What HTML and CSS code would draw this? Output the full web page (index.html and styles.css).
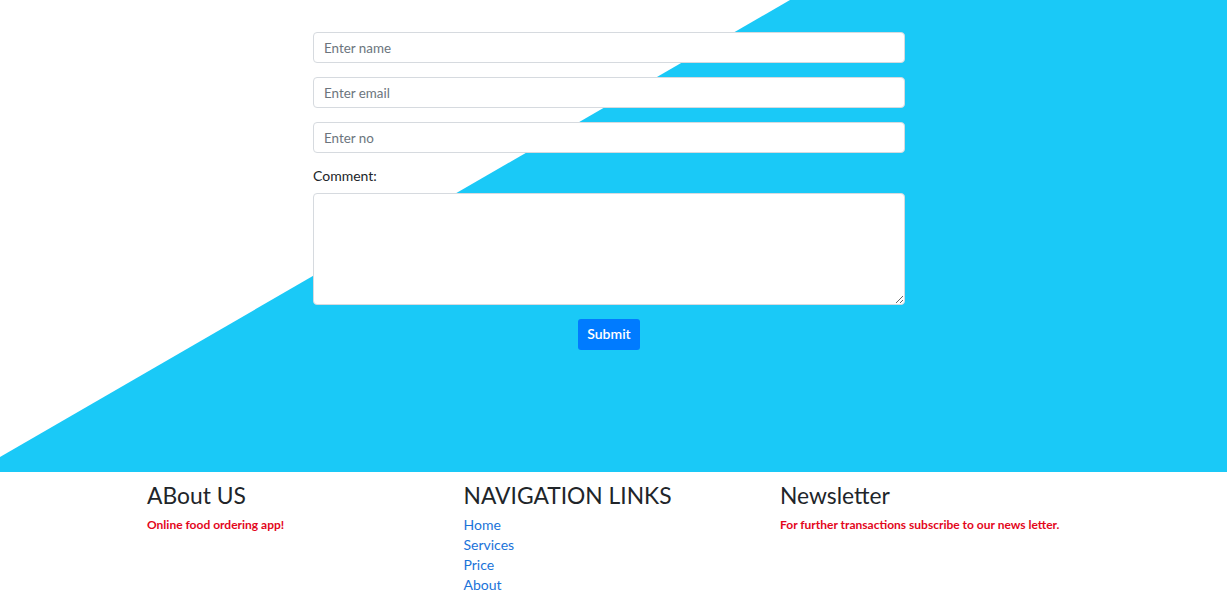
FILE: index.html
```html
<!DOCTYPE html>
<html>
<head>
<meta charset="utf-8">
<link rel="stylesheet" href="styles.css">
</head>
<body>
<section class="contact">
  <form class="contact-form">
    <input class="field" type="text" placeholder="Enter name">
    <input class="field" type="email" placeholder="Enter email">
    <input class="field" type="text" placeholder="Enter no">
    <label class="label">Comment:</label>
    <textarea class="area"></textarea>
    <div class="actions"><button class="btn" type="button">Submit</button></div>
  </form>
</section>
<footer class="footer">
  <div class="col">
    <h4 class="title">ABout US</h4>
    <p class="note">Online food ordering app!</p>
  </div>
  <div class="col">
    <h4 class="title">NAVIGATION LINKS</h4>
    <ul class="links">
      <li><a href="#">Home</a></li>
      <li><a href="#">Services</a></li>
      <li><a href="#">Price</a></li>
      <li><a href="#">About</a></li>
    </ul>
  </div>
  <div class="col">
    <h4 class="title">Newsletter</h4>
    <p class="note">For further transactions subscribe to our news letter.</p>
  </div>
</footer>
</body>
</html>
```
FILE: styles.css
```css
* { box-sizing: border-box; }
html, body { margin: 0; padding: 0; }
body {
  font-family: "Lato", "Open Sans", sans-serif;
  color: #212529;
  background: #fff;
  overflow: hidden;
}
.contact {
  position: relative;
  height: 472px;
  padding-top: 32px;
}
.contact::before {
  content: "";
  position: absolute;
  inset: 0;
  background: #1ac9f7;
  clip-path: polygon(790px 0, 100% 0, 100% 100%, 0 100%, 0 457px);
}
.contact-form {
  position: relative;
  width: 592px;
  margin-left: 313px;
  display: flex;
  flex-direction: column;
}
.field {
  height: 31px;
  margin-bottom: 14px;
  padding: 0 10px;
  border: 1px solid #d6dadf;
  border-radius: 4px;
  font: 13.4px "Lato", sans-serif;
  color: #495057;
  background: #fff;
}
.field::placeholder { color: #6c757d; }
.label {
  font-size: 14px;
  line-height: 18px;
  margin-bottom: 8px;
  color: #212529;
}
.area {
  height: 112px;
  border: 1px solid #d6dadf;
  border-radius: 4px;
  background: #fff;
  resize: vertical;
}
.actions {
  display: flex;
  justify-content: center;
  margin-top: 14px;
}
.btn {
  height: 31px;
  width: 62px;
  padding: 0 0 2px;
  border: none;
  border-radius: 3px;
  background: #007bff;
  color: #fff;
  font: 600 14px "Lato", sans-serif;
}
.footer {
  display: grid;
  grid-template-columns: 316.5px 316.5px 316.5px;
  padding-left: 147px;
  padding-top: 10px;
}
.title {
  margin: 0 0 7px;
  font-size: 22.8px;
  font-weight: 400;
  line-height: 26px;
  color: #212529;
}
.note {
  margin: 0;
  font-size: 12px;
  font-weight: 700;
  line-height: 20px;
  color: #e3061b;
}
.links {
  list-style: none;
  margin: 0;
  padding: 0;
}
.links li { line-height: 20px; font-size: 14px; }
.links a { color: #1a73d9; text-decoration: none; }
```
